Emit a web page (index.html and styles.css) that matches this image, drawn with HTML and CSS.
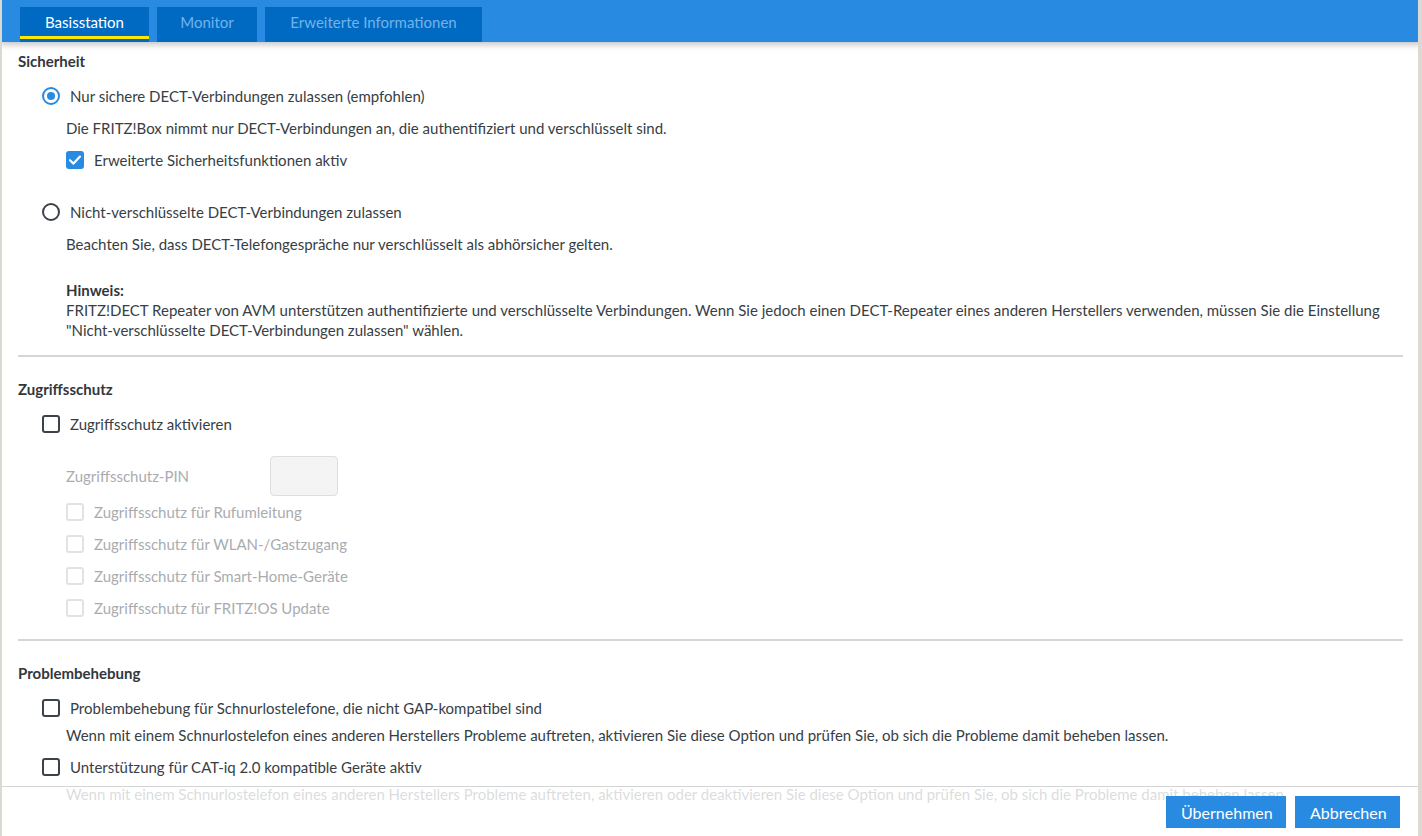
FILE: index.html
```html
<!DOCTYPE html>
<html lang="de">
<head>
<meta charset="utf-8">
<title>DECT Basisstation</title>
<link rel="stylesheet" href="styles.css">
</head>
<body>
<div class="frame">
  <header class="tabbar">
    <div class="tab active">Basisstation</div>
    <div class="tab">Monitor</div>
    <div class="tab">Erweiterte Informationen</div>
  </header>
  <main class="content">
    <section class="section">
      <h2 class="heading">Sicherheit</h2>
      <div class="opt">
        <span class="radio checked"></span>
        <span class="label">Nur sichere DECT-Verbindungen zulassen (empfohlen)</span>
      </div>
      <p class="desc">Die FRITZ!Box nimmt nur DECT-Verbindungen an, die authentifiziert und verschlüsselt sind.</p>
      <div class="opt sub">
        <span class="check checked"><svg viewBox="0 0 18 18" width="18" height="18"><path d="M4 9.2 L7.5 12.6 L14 5.6" fill="none" stroke="#fff" stroke-width="2.2" stroke-linecap="round" stroke-linejoin="round"/></svg></span>
        <span class="label">Erweiterte Sicherheitsfunktionen aktiv</span>
      </div>
      <div class="opt gap">
        <span class="radio"></span>
        <span class="label">Nicht-verschlüsselte DECT-Verbindungen zulassen</span>
      </div>
      <p class="desc">Beachten Sie, dass DECT-Telefongespräche nur verschlüsselt als abhörsicher gelten.</p>
      <div class="note">
        <strong>Hinweis:</strong>
        <p>FRITZ!DECT Repeater von AVM unterstützen authentifizierte und verschlüsselte Verbindungen. Wenn Sie jedoch einen DECT-Repeater eines anderen Herstellers verwenden, müssen Sie die Einstellung "Nicht-verschlüsselte DECT-Verbindungen zulassen" wählen.</p>
      </div>
    </section>
    <hr class="divider first">
    <section class="section">
      <h2 class="heading">Zugriffsschutz</h2>
      <div class="opt">
        <span class="check"></span>
        <span class="label">Zugriffsschutz aktivieren</span>
      </div>
      <div class="pinrow">
        <span class="pinlabel">Zugriffsschutz-PIN</span>
        <span class="pin"></span>
      </div>
      <div class="opt sub dis"><span class="check"></span><span class="label">Zugriffsschutz für Rufumleitung</span></div>
      <div class="opt sub dis"><span class="check"></span><span class="label">Zugriffsschutz für WLAN-/Gastzugang</span></div>
      <div class="opt sub dis"><span class="check"></span><span class="label">Zugriffsschutz für Smart-Home-Geräte</span></div>
      <div class="opt sub dis"><span class="check"></span><span class="label">Zugriffsschutz für FRITZ!OS Update</span></div>
    </section>
    <hr class="divider">
    <section class="section">
      <h2 class="heading">Problembehebung</h2>
      <div class="opt">
        <span class="check"></span>
        <span class="label">Problembehebung für Schnurlostelefone, die nicht GAP-kompatibel sind</span>
      </div>
      <p class="desc tight">Wenn mit einem Schnurlostelefon eines anderen Herstellers Probleme auftreten, aktivieren Sie diese Option und prüfen Sie, ob sich die Probleme damit beheben lassen.</p>
      <div class="opt">
        <span class="check"></span>
        <span class="label">Unterstützung für CAT-iq 2.0 kompatible Geräte aktiv</span>
      </div>
      <p class="desc tight">Wenn mit einem Schnurlostelefon eines anderen Herstellers Probleme auftreten, aktivieren oder deaktivieren Sie diese Option und prüfen Sie, ob sich die Probleme damit beheben lassen.</p>
    </section>
  </main>
  <footer class="footer">
    <button class="btn">Übernehmen</button>
    <button class="btn">Abbrechen</button>
  </footer>
</div>
</body>
</html>
```
FILE: styles.css
```css
html, body {
  margin: 0;
  padding: 0;
  height: 100%;
  overflow: hidden;
}
body {
  font-family: Lato, "Liberation Sans", sans-serif;
  font-size: 15px;
  color: #373e45;
  background: #fff;
}
.frame {
  height: 100vh;
  position: relative;
  border-left: 2px solid #dcd9d3;
  border-right: 4px solid #dcd9d3;
  box-sizing: border-box;
  overflow: hidden;
}
.tabbar {
  height: 42px;
  background: #288ae0;
  display: flex;
  align-items: flex-end;
  gap: 8px;
  margin: 0 -4px 0 -2px;
  padding-left: 20px;
  box-shadow: 0 3px 6px rgba(0,0,0,0.22);
  position: relative;
  z-index: 2;
}
.tab {
  height: 35px;
  box-sizing: border-box;
  background: #006ac2;
  color: #72b3ec;
  font-size: 15px;
  display: flex;
  align-items: center;
  justify-content: center;
  padding-bottom: 6px;
  position: relative;
}
.tab:nth-child(1) { width: 129px; }
.tab:nth-child(2) { width: 100px; }
.tab:nth-child(3) { width: 217px; }
.tab.active { color: #fff; }
.tab.active::after {
  content: "";
  position: absolute;
  left: 0; right: 0; bottom: 3px;
  height: 3px;
  background: #ffe600;
}
.content {
  padding: 8px 15px 0 16px;
}
.heading {
  font-size: 15px;
  font-weight: 700;
  color: #32373c;
  margin: 0;
  height: 22px;
  line-height: 22px;
}
.opt {
  display: flex;
  align-items: center;
  gap: 10px;
  height: 32px;
  padding-left: 24px;
}
.heading + .opt { margin-top: 8px; }
.opt.sub { padding-left: 48px; }
.opt.gap { margin-top: 20px; }
.desc {
  margin: 0;
  padding-left: 48px;
  line-height: 32px;
}
.desc.tight { line-height: 22px; margin: 0 0 5px; }
.radio {
  width: 18px;
  height: 18px;
  box-sizing: border-box;
  border: 2px solid #3c4249;
  border-radius: 50%;
  flex: none;
  position: relative;
}
.radio.checked { border-color: #288ae0; }
.radio.checked::after {
  content: "";
  position: absolute;
  left: 3px; top: 3px;
  width: 8px; height: 8px;
  border-radius: 50%;
  background: #288ae0;
}
.check {
  width: 18px;
  height: 18px;
  box-sizing: border-box;
  border: 2px solid #3c4249;
  border-radius: 3px;
  flex: none;
  display: flex;
}
.check.checked { background: #288ae0; border: none; }
.dis { color: #a9acaf; }
.dis .check { border-color: #e2e2e2; }
.note {
  padding-left: 48px;
  margin-top: 20px;
  line-height: 20px;
}
.note strong { display: block; color: #32373c; }
.note p { margin: 0; }
.divider {
  border: none;
  border-top: 2px solid #d6d6d6;
  margin: 15px 0 21px 0;
  height: 0;
}
.divider.first { margin-top: 15px; }
.pinrow {
  display: flex;
  align-items: center;
  padding-left: 48px;
  margin-top: 16px;
  height: 40px;
}
.pinlabel { width: 204px; color: #a9acaf; }
.pin {
  width: 68px;
  height: 40px;
  box-sizing: border-box;
  border: 1px solid #dedede;
  border-radius: 4px;
  background: #f4f4f4;
}
.footer {
  position: absolute;
  left: 0; right: 0; bottom: 0;
  height: 50px;
  background: rgba(255,255,255,0.82);
  border-top: 1px solid #d4d4d4;
  display: flex;
  justify-content: flex-end;
  align-items: center;
  gap: 9px;
  padding-right: 18px;
  padding-top: 1px;
  box-sizing: border-box;
  z-index: 3;
}
.btn {
  font-family: inherit;
  font-size: 16px;
  color: #fff;
  background: #288ae0;
  border: none;
  height: 32px;
  padding: 0 15px;
  cursor: pointer;
}
.btn:first-child { width: 120px; }
.btn:last-child { width: 105px; }
```
